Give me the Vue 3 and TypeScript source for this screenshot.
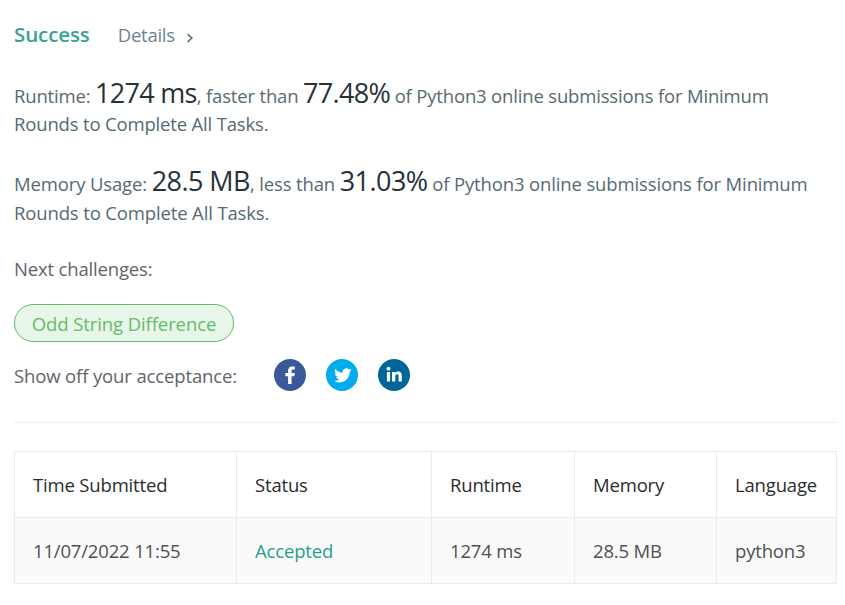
<script setup lang="ts">
interface Stat {
  kind: string
  label: string
  value: string
  compare: string
  percent: string
}

const stats: Stat[] = [
  { kind: 'runtime', label: 'Runtime:', value: '1274 ms', compare: ', faster than', percent: '77.48%' },
  { kind: 'memory', label: 'Memory Usage:', value: '28.5 MB', compare: ', less than', percent: '31.03%' },
]

const columns: string[] = ['Time Submitted', 'Status', 'Runtime', 'Memory', 'Language']
const row: string[] = ['11/07/2022 11:55', 'Accepted', '1274 ms', '28.5 MB', 'python3']
</script>

<template>
  <main class="result">
    <header class="heading">
      <span class="success">Success</span>
      <a class="details">Details
        <svg class="chevron" width="8" height="10" viewBox="0 0 8 10"><path d="M1.6 1 5.8 5 1.6 9" /></svg>
      </a>
    </header>

    <p v-for="stat in stats" :key="stat.label" class="stat" :class="stat.kind">
      {{ stat.label }} <span class="big">{{ stat.value }}</span>{{ stat.compare }} <span class="big">{{ stat.percent }}</span> of Python3 online submissions for Minimum<br>Rounds to Complete All Tasks.
    </p>

    <p class="next">Next challenges:</p>
    <a class="pill">Odd String Difference</a>

    <div class="share">
      <span class="share-label">Show off your acceptance:</span>
      <svg class="social" viewBox="0 0 32 32">
        <circle cx="16" cy="16" r="16" fill="#3b5998" />
        <path fill="#fff" d="M17.600 25v-7.800h2.800l.4-3.300h-3.200v-1.900c0-.9.300-1.400 1.500-1.400h1.700V7.600c-.3 0-1.300-.1-2.400-.1-2.700 0-4.300 1.500-4.300 4.200v2.200h-2.800v3.300h2.800V25z" />
      </svg>
      <svg class="social" viewBox="0 0 32 32">
        <circle cx="16" cy="16" r="16" fill="#00aced" />
        <path fill="#fff" d="M24.700 10.500a7 7 0 0 1-2 .6 3.500 3.500 0 0 0 1.500-2 7 7 0 0 1-2.200.9 3.550 3.550 0 0 0-6.100 3.200 10 10 0 0 1-7.300-3.700 3.550 3.550 0 0 0 1.100 4.700 3.500 3.500 0 0 1-1.600-.4c0 1.700 1.200 3.200 2.800 3.500a3.500 3.500 0 0 1-1.600.1 3.550 3.550 0 0 0 3.300 2.400 7.100 7.100 0 0 1-5.300 1.500 10 10 0 0 0 5.500 1.600c6.500 0 10.300-5.500 10.100-10.600a7 7 0 0 0 1.800-1.800z" transform="translate(.8 .5)" />
      </svg>
      <svg class="social" viewBox="0 0 32 32">
        <circle cx="16" cy="16" r="16" fill="#006699" />
        <g fill="#fff">
          <circle cx="10.500" cy="9.700" r="1.900" />
          <path d="M8.900 12.900h3.200V22.500H8.900zM14 12.900h3v1.300c.5-.9 1.600-1.600 3.100-1.600 3.100 0 3.700 2 3.700 4.500v5.400h-3.200v-4.900c0-1.100 0-2.400-1.500-2.400s-1.800 1.100-1.800 2.300v5H14z" />
        </g>
      </svg>
    </div>

    <hr class="divider">

    <table class="submissions">
      <colgroup>
        <col class="c-time"><col class="c-status"><col class="c-runtime"><col class="c-memory"><col class="c-lang">
      </colgroup>
      <thead>
        <tr><th v-for="name in columns" :key="name">{{ name }}</th></tr>
      </thead>
      <tbody>
        <tr>
          <td v-for="(cell, i) in row" :key="i" :class="{ accepted: i === 1 }">{{ cell }}</td>
        </tr>
      </tbody>
    </table>
  </main>
</template>

<style>
body {
  margin: 0;
  background: #fff;
}
</style>

<style scoped>
.result {
  box-sizing: border-box;
  width: 845px;
  height: 605px;
  padding: 20px 8px 0 14px;
  font-family: "Open Sans", "Noto Sans", sans-serif;
  font-size: 18.500px;
  letter-spacing: -0.17px;
  color: #626469;
}
.heading {
  display: flex;
  align-items: center;
  height: 30px;
  line-height: 30px;
}
.success {
  margin-top: -3px;
  font-size: 20.500px;
  font-weight: 600;
  letter-spacing: -0.1px;
  color: #3aa294;
}
.details {
  margin-left: 28px;
  letter-spacing: -0.25px;
  color: #6a8591;
}
.chevron {
  margin-left: 7px;
  margin-bottom: -1px;
  fill: none;
  stroke: #546e7a;
  stroke-width: 1.7;
}
.stat {
  margin: 0;
  padding-top: 29px;
  height: 59px;
  line-height: 28px;
  white-space: nowrap;
  color: #566a73;
}
.memory {
  line-height: 28.500px;
  letter-spacing: -0.14px;
}
.big {
  font-size: 27px;
  line-height: 28px;
  letter-spacing: -0.7px;
  color: #263238;
}
.memory .big {
  letter-spacing: -0.55px;
}
.next {
  margin: 0;
  padding-top: 29px;
  line-height: 28px;
}
.pill {
  display: block;
  box-sizing: border-box;
  width: 220px;
  height: 38px;
  margin-top: 21px;
  border: 1px solid #66bb6a;
  border-radius: 19px;
  background: #e8f5e9;
  color: #66bb6a;
  letter-spacing: -0.1px;
  line-height: 38px;
  text-align: center;
}
.share {
  display: flex;
  align-items: center;
  height: 34px;
  margin-top: 16px;
}
.share-label {
  width: 260px;
  letter-spacing: -0.13px;
}
.social {
  width: 32px;
  height: 32px;
  margin-right: 20px;
}
.divider {
  height: 1px;
  margin: 30px 0 28px;
  border: 0;
  background: #eee;
}
.submissions {
  width: 823px;
  table-layout: fixed;
  border-collapse: collapse;
}
.c-time { width: 222px; }
.c-status { width: 195px; }
.c-runtime { width: 143px; }
.c-memory { width: 142px; }
th,
td {
  box-sizing: border-box;
  height: 66px;
  padding: 0 0 0 18px;
  border: 1px solid #ebebeb;
  font-weight: 400;
  text-align: left;
  white-space: nowrap;
}
th {
  color: #2c2c2c;
}
td {
  background: #fafafa;
  color: #505050;
}
.accepted {
  color: #269e90;
}
</style>
